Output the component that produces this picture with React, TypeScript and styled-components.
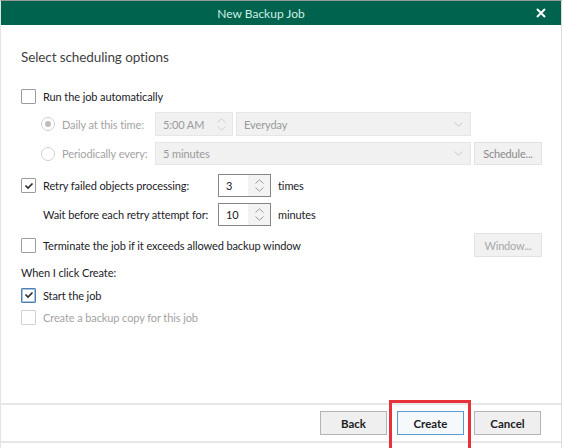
import React from 'react'
import styled, { createGlobalStyle, css } from 'styled-components'

const GlobalStyle = createGlobalStyle`
  html, body {
    margin: 0;
    padding: 0;
    background: #fff;
  }
  body {
    font-family: Lato, "Noto Sans", sans-serif;
    font-size: 11px;
    letter-spacing: -0.1px;
  }
`

const Window = styled.div`
  width: 562px;
  height: 448px;
  display: flex;
  flex-direction: column;
  border-top: 1px solid #9a9a9a;
  border-left: 1px solid #e4e4e4;
  border-right: 1px solid #dcdcdc;
  box-sizing: border-box;
  background: #fff;
  overflow: hidden;
`

const TitleBar = styled.div`
  height: 24px;
  background: #00634e;
  color: #cfeee2;
  display: flex;
  align-items: center;
  justify-content: center;
  padding-right: 40px;
  position: relative;
  font-size: 12px;
  letter-spacing: 0;
  flex-shrink: 0;
`

const CloseButton = styled.span`
  position: absolute;
  right: 14px;
  top: 6px;
  width: 12px;
  height: 12px;
  display: flex;
  svg {
    width: 12px;
    height: 12px;
  }
`

const Body = styled.div`
  flex: 1;
  padding-left: 20px;
  display: flex;
  flex-direction: column;
`

const Heading = styled.h1`
  margin: 22px 0 0;
  font-size: 13.5px;
  line-height: 20px;
  letter-spacing: -0.1px;
  font-weight: 400;
  color: #3f3f3f;
`

const Row = styled.div<{ $top: number; $indent?: number; $h?: number }>`
  display: flex;
  align-items: center;
  margin-top: ${(p) => p.$top}px;
  padding-left: ${(p) => p.$indent || 0}px;
  height: ${(p) => p.$h || 16}px;
`

const Box = styled.span<{ $disabled?: boolean; $focus?: boolean }>`
  width: 15px;
  height: 15px;
  box-sizing: border-box;
  border: 1px solid #9c9c9c;
  border-radius: 1px;
  background: #fff;
  display: flex;
  align-items: center;
  justify-content: center;
  flex-shrink: 0;
  ${(p) => p.$disabled && css`border-color: #d2d2d2;`}
  ${(p) => p.$focus && css`border-color: #4d7fb0; box-shadow: inset 0 0 0 1px #a9c4df;`}
  svg {
    width: 10px;
    height: 10px;
  }
`

const Radio = styled.span<{ $selected?: boolean }>`
  width: 14px;
  height: 14px;
  box-sizing: border-box;
  border: 1px solid #cfcfcf;
  border-radius: 50%;
  background: #fff;
  display: flex;
  align-items: center;
  justify-content: center;
  flex-shrink: 0;
  &::after {
    content: '';
    width: 6px;
    height: 6px;
    border-radius: 50%;
    background: ${(p) => (p.$selected ? '#bdbdbd' : 'transparent')};
  }
`

const Label = styled.span<{ $muted?: boolean; $width?: number; $gap?: number }>`
  color: ${(p) => (p.$muted ? '#a3a3a3' : '#221b27')};
  margin-left: ${(p) => (p.$gap === undefined ? 7 : p.$gap)}px;
  width: ${(p) => (p.$width ? `${p.$width}px` : 'auto')};
  white-space: nowrap;
  flex-shrink: 0;
`

const Field = styled.div<{ $width: number; $disabled?: boolean }>`
  width: ${(p) => p.$width}px;
  height: 100%;
  box-sizing: border-box;
  display: flex;
  align-items: stretch;
  border: 1px solid ${(p) => (p.$disabled ? '#e6e6e6' : '#858585')};
  background: ${(p) => (p.$disabled ? '#f1f1f1' : '#fff')};
  color: ${(p) => (p.$disabled ? '#9a9a9a' : '#222')};
  flex-shrink: 0;
`

const FieldText = styled.span`
  flex: 1;
  display: flex;
  align-items: center;
  padding-left: 7px;
`

const Spinner = styled.span<{ $disabled?: boolean }>`
  width: 22px;
  display: flex;
  flex-direction: column;
  align-items: center;
  justify-content: center;
  gap: 3px;
  background: ${(p) => (p.$disabled ? 'transparent' : '#f3f3f3')};
  svg {
    width: 9px;
    height: 5px;
  }
`

const Chevron = styled.span`
  width: 24px;
  display: flex;
  align-items: center;
  justify-content: center;
  svg {
    width: 9px;
    height: 5px;
  }
`

const Gap = styled.span<{ $w: number }>`
  width: ${(p) => p.$w}px;
  flex-shrink: 0;
`

const Spacer = styled.span`
  flex: 1;
`

const SideButton = styled.button<{ $disabled?: boolean }>`
  width: 68px;
  height: 100%;
  margin-right: 19px;
  box-sizing: border-box;
  border: 1px solid #e2e2e2;
  background: #f1f1f1;
  color: ${(p) => (p.$disabled ? '#a8a8a8' : '#8a8a8a')};
  font-family: inherit;
  font-size: 11px;
  letter-spacing: -0.2px;
  padding: 0;
`

const Footer = styled.div`
  height: 36px;
  flex-shrink: 0;
  margin-bottom: 5px;
  border-top: 2px solid #e7e7e7;
  border-bottom: 2px solid #e7e7e7;
  display: flex;
  align-items: center;
  justify-content: flex-end;
  gap: 10px;
  padding-right: 20px;
`

const FooterButton = styled.button<{ $primary?: boolean }>`
  width: 67px;
  height: 24px;
  box-sizing: border-box;
  border: 1px solid ${(p) => (p.$primary ? '#5a9bd1' : '#b4b4b4')};
  background: ${(p) => (p.$primary ? '#f6f9fc' : '#efefef')};
  color: #1d1d1d;
  font-family: inherit;
  font-size: 11.5px;
  font-weight: 700;
  padding: 0;
`

const Highlight = styled.span`
  position: relative;
  display: flex;
  &::after {
    content: '';
    position: absolute;
    left: -8px;
    right: -7px;
    top: -11px;
    bottom: -24px;
    border: 3px solid #e6323a;
    pointer-events: none;
  }
`

const Check = () => (
  <svg viewBox="0 0 10 10" fill="none">
    <path d="M1.5 4.5 L4 7 L8.5 2.5" stroke="#2a2a2a" strokeWidth="1.6" />
  </svg>
)

const Up = ({ color }: { color: string }) => (
  <svg viewBox="0 0 9 5" fill="none">
    <path d="M0.5 4.5 L4.5 0.8 L8.5 4.5" stroke={color} strokeWidth="1" />
  </svg>
)

const Down = ({ color }: { color: string }) => (
  <svg viewBox="0 0 9 5" fill="none">
    <path d="M0.5 0.5 L4.5 4.2 L8.5 0.5" stroke={color} strokeWidth="1" />
  </svg>
)

const NumberField = ({ value, disabled, width = 53 }: { value: string; disabled?: boolean; width?: number }) => {
  const c = disabled ? '#d0d0d0' : '#9a9a9a'
  return (
    <Field $width={width} $disabled={disabled}>
      <FieldText>{value}</FieldText>
      <Spinner $disabled={disabled}>
        <Up color={c} />
        <Down color={c} />
      </Spinner>
    </Field>
  )
}

const Dropdown = ({ value, width }: { value: string; width: number }) => (
  <Field $width={width} $disabled>
    <FieldText>{value}</FieldText>
    <Chevron>
      <Down color="#c8c8c8" />
    </Chevron>
  </Field>
)

export default function App() {
  return (
    <>
      <GlobalStyle />
      <Window>
        <TitleBar>
          New Backup Job
          <CloseButton>
            <svg viewBox="0 0 12 12" fill="none">
              <path d="M2 2 L10 10 M10 2 L2 10" stroke="#fff" strokeWidth="2" />
            </svg>
          </CloseButton>
        </TitleBar>
        <Body>
          <Heading>Select scheduling options</Heading>

          <Row $top={21}>
            <Box />
            <Label>Run the job automatically</Label>
          </Row>

          <Row $top={8} $indent={20} $h={24}>
            <Radio $selected />
            <Label $muted $width={93}>Daily at this time:</Label>
            <NumberField value="5:00 AM" disabled width={78} />
            <Gap $w={3} />
            <Dropdown value="Everyday" width={235} />
          </Row>

          <Row $top={6} $indent={20} $h={23}>
            <Radio />
            <Label $muted $width={93}>Periodically every:</Label>
            <Dropdown value="5 minutes" width={316} />
            <Gap $w={3} />
            <SideButton>Schedule...</SideButton>
          </Row>

          <Row $top={9} $h={23}>
            <Box>
              <Check />
            </Box>
            <Label $width={175}>Retry failed objects processing:</Label>
            <NumberField value="3" />
            <Label>times</Label>
          </Row>

          <Row $top={6} $h={23}>
            <Label $gap={22} $width={175}>Wait before each retry attempt for:</Label>
            <NumberField value="10" />
            <Label>minutes</Label>
          </Row>

          <Row $top={7} $h={24}>
            <Box />
            <Label>Terminate the job if it exceeds allowed backup window</Label>
            <Spacer />
            <SideButton $disabled>Window...</SideButton>
          </Row>

          <Row $top={7}>
            <Label $gap={0}>When I click Create:</Label>
          </Row>

          <Row $top={7}>
            <Box $focus>
              <Check />
            </Box>
            <Label>Start the job</Label>
          </Row>

          <Row $top={6}>
            <Box $disabled />
            <Label $muted>Create a backup copy for this job</Label>
          </Row>
        </Body>
        <Footer>
          <FooterButton>Back</FooterButton>
          <Highlight>
            <FooterButton $primary>Create</FooterButton>
          </Highlight>
          <FooterButton>Cancel</FooterButton>
        </Footer>
      </Window>
    </>
  )
}
